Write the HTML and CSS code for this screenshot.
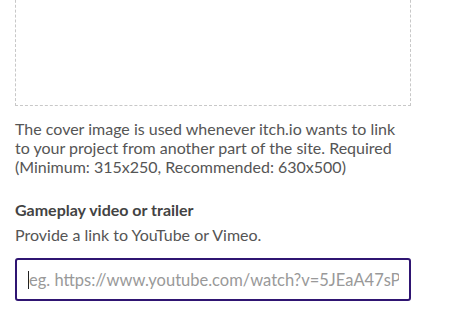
FILE: index.html
```html
<!DOCTYPE html>
<html>
<head>
<meta charset="utf-8">
<link rel="stylesheet" href="styles.css">
</head>
<body>
<div class="form">
  <div class="cover">
    <div class="dropzone"></div>
    <p class="sub">The cover image is used whenever itch.io wants to link<br>to your project from another part of the site. Required<br>(Minimum: 315x250, Recommended: 630x500)</p>
  </div>
  <div class="field">
    <div class="label">Gameplay video or trailer</div>
    <p class="sub">Provide a link to YouTube or Vimeo.</p>
    <div class="input"><span class="caret"></span><span class="placeholder">eg. https://www.youtube.com/watch?v=5JEaA47sPHo</span></div>
  </div>
</div>
</body>
</html>
```
FILE: styles.css
```css
html, body { margin: 0; padding: 0; background: #fff; }
body { font-family: Lato, "Open Sans", sans-serif; font-size: 14px; color: #434343; }
.form { width: 396px; margin-left: 15px; }
.dropzone { height: 115px; margin-top: -10px; border: 1px dashed #c8c8c8; border-top: none; }
.sub { margin: 0; color: #555; font-size: 16px; line-height: 19px; white-space: nowrap; }
.cover .sub { margin-top: 13px; }
.field { margin-top: 24px; }
.label { font-weight: bold; font-size: 16px; line-height: 19px; color: #434343; margin-bottom: 6px; }
.input { margin-top: 14px; height: 43px; border: 2px solid #2f1572; border-radius: 3px; box-sizing: border-box; display: flex; align-items: center; padding: 0 10px 0 11px; white-space: nowrap; }
.caret { width: 1px; height: 18px; background: #222; flex: none; }
.placeholder { color: #999; font-size: 16.5px; flex: 1; min-width: 0; overflow: hidden; }
```
